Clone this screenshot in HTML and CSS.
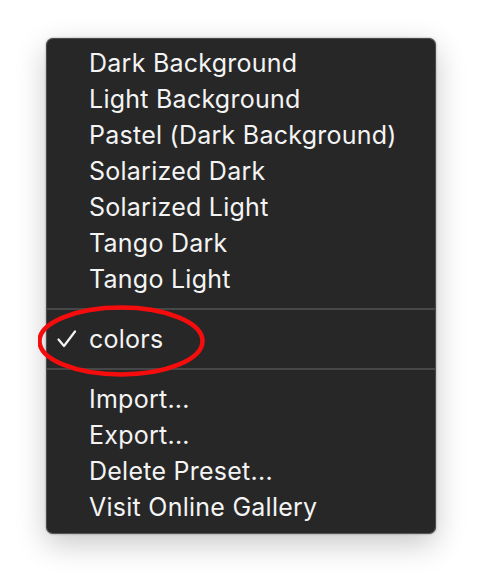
FILE: index.html
```html
<!DOCTYPE html>
<html>
<head>
<meta charset="utf-8">
<link rel="stylesheet" href="styles.css">
</head>
<body>
<div class="stage">
  <div class="menu">
    <div class="item">Dark Background</div>
    <div class="item">Light Background</div>
    <div class="item">Pastel (Dark Background)</div>
    <div class="item">Solarized Dark</div>
    <div class="item">Solarized Light</div>
    <div class="item">Tango Dark</div>
    <div class="item">Tango Light</div>
    <div class="sep"></div>
    <div class="item checked">
      <svg class="check" width="20" height="18" viewBox="0 0 20 18"><path d="M1.5 9.5 L7 16 L18 1.5" fill="none" stroke="#f2f2f2" stroke-width="2.2" stroke-linecap="round" stroke-linejoin="round"/></svg>colors
      <svg class="ring" width="170" height="76" viewBox="0 0 170 76"><ellipse cx="83" cy="38" rx="81.5" ry="33.5" fill="none" stroke="#f50d0d" stroke-width="4.5"/></svg>
    </div>
    <div class="sep"></div>
    <div class="item">Import...</div>
    <div class="item">Export...</div>
    <div class="item">Delete Preset...</div>
    <div class="item">Visit Online Gallery</div>
  </div>
</div>
</body>
</html>
```
FILE: styles.css
```css
html, body {
  margin: 0;
  padding: 0;
  background: #ffffff;
}
.stage {
  width: 482px;
  height: 588px;
  padding: 38px 0 0 46px;
  box-sizing: border-box;
}
.menu {
  width: 390px;
  box-sizing: border-box;
  background: #272727;
  border: 1px solid #4c4c4c;
  border-bottom-color: #555555;
  border-radius: 7px;
  padding: 6px 0 8px 0;
  box-shadow: 0 10px 30px rgba(0,0,0,0.22), 0 0 2px rgba(0,0,0,0.4);
  font-family: "Inter", "Liberation Sans", sans-serif;
  color: #f4f4f4;
}
.item {
  position: relative;
  height: 36px;
  line-height: 36px;
  padding-left: 42px;
  font-size: 25px;
  letter-spacing: 0.25px;
  white-space: nowrap;
}
.check {
  position: absolute;
  left: 10px;
  top: 9px;
}
.sep {
  height: 2px;
  margin: 11px 0;
  background: #474747;
}
.ring {
  position: absolute;
  left: -9px;
  top: -18px;
}
```
